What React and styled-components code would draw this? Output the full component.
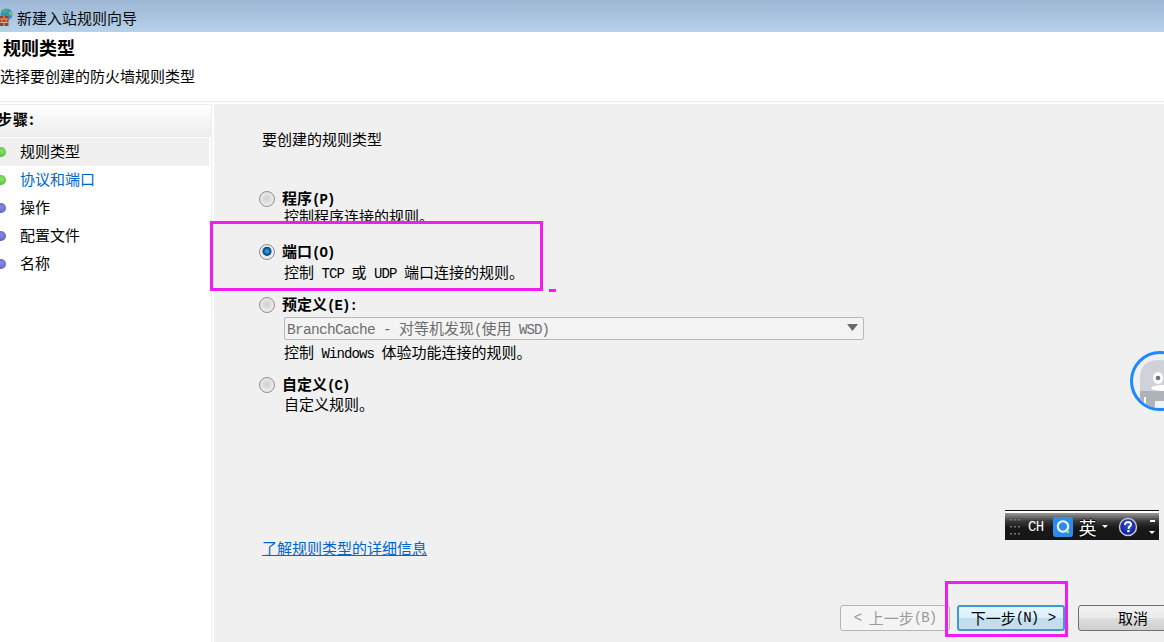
import React from 'react';
import styled, { createGlobalStyle } from 'styled-components';

const Global = createGlobalStyle`
  html, body { margin: 0; padding: 0; background: #fff; overflow: hidden; }
  body { font-family: "Noto Sans CJK SC", "Liberation Sans", sans-serif; font-size: 15px; color: #000; }
`;
const Root = styled.div`position: relative; width: 1164px; height: 642px; overflow: hidden; display: flex; flex-direction: column; background: #fff;`;
const TitleBar = styled.div`height: 32px; flex: none; display: flex; align-items: center; gap: 4px; background: linear-gradient(#9db6d4, #b6d1ea); padding-top: 3px; box-sizing: border-box;`;
const TitleText = styled.span`font-size: 15px; line-height: 20px; color: #0a0a0a;`;
const Header = styled.div`height: 70px; flex: none; box-sizing: border-box; border-bottom: 1px solid #e8e8e8;`;
const HeadTitle = styled.div`font-size: 18px; font-weight: 700; line-height: 24px; margin: 3px 0 0 3px;`;
const HeadSub = styled.div`font-size: 15px; line-height: 20px; margin-top: 7px;`;
const Body = styled.div`flex: 1; min-height: 0; display: flex; margin-top: 2px;`;
const Side = styled.div`width: 212px; flex: none; box-sizing: border-box; border: 1px solid #ececec; border-left: 0; border-bottom: 0;`;
const StepsHead = styled.div`height: 32px; margin-bottom: 1px; box-sizing: border-box; padding-bottom: 4px; display: flex; align-items: center; font-weight: 700; font-size: 15px; line-height: 20px; background: linear-gradient(#fff, #ececec);`;
const StepsLabel = styled.span`margin-left: -3px; letter-spacing: 1px;`;
const StepRow = styled.div`height: 28px; width: 209px; box-sizing: border-box; padding-bottom: 2px; display: flex; align-items: center; gap: 14px; font-size: 15px; line-height: 20px; background: ${p => p.$active ? '#f0f0f0' : 'transparent'}; color: ${p => p.$link ? '#0066cc' : '#000'};`;
const Bullet = styled.span`width: 10px; height: 10px; margin-left: -4px; margin-top: 2px; border-radius: 50%; flex: none; background: ${p => p.$done ? 'radial-gradient(circle at 55% 40%, #90e070, #3cb528)' : 'radial-gradient(circle at 55% 40%, #8a8ae0, #5252c0)'};`;
const Main = styled.div`flex: 1; margin-left: 2px; background: #f0f0f0; display: flex; flex-direction: column; padding: 25px 0 11px 45px; min-width: 0;`;
const Heading = styled.div`line-height: 20px; height: 20px; margin-left: 3px;`;
const OptionRow = styled.div`display: flex; align-items: center; gap: 7px; height: 20px; line-height: 18px; font-weight: 700; flex: none; margin-top: ${p => p.$mt || 0}px;`;
const Radio = styled.span`width: 16px; height: 16px; border-radius: 50%; flex: none; box-sizing: border-box; border: 1px solid #8f8f8f;
  background: ${p => p.$on ? 'radial-gradient(circle at 50% 45%, #3fb0e8 0, #0e5f98 30%, #0b4a7a 40%, #e6e6e6 47%, #f6f6f6 100%)' : 'radial-gradient(circle at 50% 45%, #cfcfcf 0, #e2e2e2 45%, #f8f8f8 100%)'};`;
const OptionLabel = styled.span`margin-bottom: 2px;`;
const Desc = styled.div`height: 18px; flex: none; line-height: 18px; margin-left: 25px; margin-top: ${p => p.$mt || 0}px; white-space: pre;`;
const Lat = styled.span`font-family: "Liberation Mono", monospace; font-size: 14px; letter-spacing: -0.9px; line-height: 0; white-space: pre;`;
const SelectLat = styled(Lat)`font-size: 14.5px; letter-spacing: -0.7px;`;
const NextCaret = styled(Lat)`margin-left: 2px;`;
const Highlight = styled.div`position: relative; flex: none; box-sizing: border-box; width: 333px; height: 70px; margin: -4px 0 0 -49px; padding: 18px 0 0 46px; border: 3px solid #f01cf0; background: #f0f0f0;`;
const PredefRow = styled(OptionRow)`margin-top: 4px;`;
const Select = styled.div`width: 580px; height: 23px; flex: none; box-sizing: border-box; margin: 2px 0 0 25px; padding: 0 5px 2px 2px; display: flex; align-items: center; justify-content: space-between; border: 1px solid #b4b8b8; border-radius: 2px; background: #f3f3f3; color: #6d6d6d; font-size: 15px; line-height: 18px;`;
const LinkText = styled.a`margin: 125px 0 0 3px; line-height: 20px; height: 20px; color: #0066cc; text-decoration: underline; align-self: flex-start;`;
const Footer = styled.div`margin-top: auto; display: flex; justify-content: flex-end; margin-right: -24px;`;
const Btn = styled.button`height: 26px; box-sizing: border-box; font: inherit; font-size: 15px; line-height: 18px; padding: 0; border-radius: 3px; display: flex; align-items: center; justify-content: center; white-space: pre;`;
const BackBtn = styled(Btn)`width: 110px; border: 1px solid #b5b5b5; background: #f4f4f4; color: #9a9a9a;`;
const NextBtn = styled(Btn)`width: 108px; margin-left: 7px; padding-left: 4px; border: 2px solid #3c9ccf; background: linear-gradient(#e6f5fd 0, #d9f0fc 50%, #bedfee 52%, #c9dde6 100%); color: #000;`;
const CancelBtn = styled(Btn)`width: 110px; margin-left: 13px; border: 1px solid #707070; background: linear-gradient(#f2f2f2 0, #ebebeb 50%, #dddddd 52%, #cfcfcf 100%); color: #000;`;
const NextMark = styled.div`position: absolute; left: 945px; top: 581px; width: 123px; height: 56px; box-sizing: border-box; border: 3px solid #f01cf0;`;
const Dash = styled.div`position: absolute; left: 549px; top: 289px; width: 7px; height: 3px; background: #f01cf0;`;
const Bot = styled.div`position: absolute; left: 1130px; top: 351px; width: 60px; height: 60px; box-sizing: border-box; border: 3px solid #1e88ff; border-radius: 50%; background: #f0f0f0; overflow: hidden;`;
const Ime = styled.div`position: absolute; left: 1005px; top: 510px; width: 154px; height: 30px; box-sizing: border-box; border-top: 1px solid #111; padding-top: 2px; background: #fff;`;
const ImeInner = styled.div`height: 100%; background: linear-gradient(#9a9a9a 0, #3a3a3a 30%, #181818 55%, #161616 100%); display: flex; align-items: center;`;
const ImeCh = styled.span`font-family: "Liberation Mono", monospace; font-size: 14px; letter-spacing: -0.6px; color: #fff; margin-left: 7px;`;
const ImeYing = styled.span`font-size: 18px; line-height: 20px; color: #fff; margin-left: 6px; text-shadow: 1px 0 0 #000, -1px 0 0 #000, 0 1px 0 #000, 0 -1px 0 #000;`;
const ImeCaret = styled.span`width: 0; height: 0; border: 3px solid transparent; border-top: 3px solid #fff; border-bottom: 0; margin-left: 5px; flex: none;`;
const ImeMarks = styled.span`display: flex; flex-direction: column; gap: 9px; margin-left: 12px; width: 5px; align-items: center; flex: none;`;
const ImeDash = styled.span`width: 5px; height: 2px; background: #fff;`;
const MarkCaret = styled(ImeCaret)`margin-left: 0;`;

const WallIcon = () => (
  <svg width="13" height="19" viewBox="0 0 13 19" style={{flex:'none'}}>
    <circle cx="6.500" cy="6.500" r="6" fill="#2f8fd0"/>
    <path d="M1.500 3.500 Q4 0.500 8 1 L7 4.500 L3 5.500Z" fill="#4fb04f"/>
    <path d="M9 2.500 L12.500 5 L12 8 L9 6.500Z" fill="#70c070"/>
    <rect x="0" y="8" width="8.500" height="10" fill="#9a4028"/>
    <path d="M0 11h8.500M0 14.500h8.500M4 8v3M2 11v3.500M6 11v3.500M4 14.500v3.500" stroke="#d8a890" strokeWidth="1" fill="none"/>
  </svg>
);
const QLogo = () => (
  <svg width="20" height="20" viewBox="0 0 20 20" style={{marginLeft:9, flex:'none'}}>
    <rect width="20" height="20" rx="3" fill="#2e8bf0"/>
    <circle cx="10" cy="9.500" r="5.200" fill="none" stroke="#fff" strokeWidth="2"/>
    <rect x="13.500" y="13.500" width="2.500" height="2.500" fill="#b8e04a"/>
  </svg>
);
const Help = () => (
  <svg width="20" height="20" viewBox="0 0 20 20" style={{marginLeft:10, flex:'none'}}>
    <defs><radialGradient id="hb" cx="50%" cy="40%" r="60%"><stop offset="0" stopColor="#3a4fe0"/><stop offset="1" stopColor="#0a1a90"/></radialGradient></defs>
    <circle cx="10" cy="10" r="8.500" fill="url(#hb)" stroke="#c8c8c8" strokeWidth="1.500"/>
    <path d="M7 8 Q7 5 10 5 Q13 5 13 7.500 Q13 9 11 10 L10.500 12" stroke="#fff" strokeWidth="2" fill="none"/>
    <rect x="9.300" y="13" width="2.200" height="2.200" fill="#fff"/>
  </svg>
);
const Dots = () => (
  <svg width="12" height="18" viewBox="0 0 12 18" style={{marginLeft:4, flex:'none'}}>
    <path d="M1 1h2v1.500H1zM5 1h2v1.500H5zM9 1h2v1.500H9zM1 8h2v1.500H1zM5 8h2v1.500H5zM9 8h2v1.500H9zM1 15h2v1.500H1zM5 15h2v1.500H5zM9 15h2v1.500H9z" fill="#777"/>
  </svg>
);
const BotFace = () => (
  <svg width="54" height="54" viewBox="0 0 54 54">
    <path d="M7 54 V24 Q7 6 26 6 Q45 6 45 24 V54Z" fill="#cfd3d9"/>
    <rect x="7" y="37" width="40" height="17" fill="#aeb3ba"/>
    <ellipse cx="25" cy="24" rx="5" ry="6" fill="#fff"/>
    <circle cx="25" cy="24" r="2.300" fill="#70757d"/>
    <ellipse cx="30" cy="34" rx="12" ry="3" fill="#fff"/>
    <rect x="22" y="47" width="12" height="7" fill="#f0f4f8"/>
    <rect x="11" y="43" width="2" height="8" fill="#fff"/>
  </svg>
);
const Arrow = () => (
  <svg width="11" height="7" viewBox="0 0 11 7" style={{flex:'none'}}><path d="M0 0h11L5.500 7z" fill="#6a6a6a"/></svg>
);

const steps = [
  { t: '规则类型', done: true, active: true },
  { t: '协议和端口', done: true, link: true },
  { t: '操作' },
  { t: '配置文件' },
  { t: '名称' },
];

export default function App() {
  return (
    <Root>
      <Global />
      <TitleBar><WallIcon /><TitleText>新建入站规则向导</TitleText></TitleBar>
      <Header>
        <HeadTitle>规则类型</HeadTitle>
        <HeadSub>选择要创建的防火墙规则类型</HeadSub>
      </Header>
      <Body>
        <Side>
          <StepsHead><StepsLabel>步骤:</StepsLabel></StepsHead>
          {steps.map(s => (
            <StepRow key={s.t} $active={s.active} $link={s.link}>
              <Bullet $done={s.done} />{s.t}
            </StepRow>
          ))}
        </Side>
        <Main>
          <Heading>要创建的规则类型</Heading>
          <OptionRow $mt={40}><Radio /><OptionLabel>程序<Lat>(P)</Lat></OptionLabel></OptionRow>
          <Desc $mt={-2}>控制程序连接的规则。</Desc>
          <Highlight>
            <OptionRow><Radio $on /><OptionLabel>端口<Lat>(O)</Lat></OptionLabel></OptionRow>
            <Desc $mt={1}>控制<Lat> TCP </Lat>或<Lat> UDP </Lat>端口连接的规则。</Desc>
          </Highlight>
          <PredefRow><Radio /><OptionLabel>预定义<Lat>(E):</Lat></OptionLabel></PredefRow>
          <Select>
            <span><SelectLat>BranchCache - </SelectLat>对等机发现<Lat>(</Lat>使用<Lat> WSD)</Lat></span>
            <Arrow />
          </Select>
          <Desc $mt={3}>控制<Lat> Windows </Lat>体验功能连接的规则。</Desc>
          <OptionRow $mt={14}><Radio /><OptionLabel>自定义<Lat>(C)</Lat></OptionLabel></OptionRow>
          <Desc>自定义规则。</Desc>
          <LinkText>了解规则类型的详细信息</LinkText>
          <Footer>
            <BackBtn><Lat>{'< '}</Lat>上一步<Lat>(B)</Lat></BackBtn>
            <NextBtn>下一步<Lat>(N) </Lat><NextCaret>&gt;</NextCaret></NextBtn>
            <CancelBtn>取消</CancelBtn>
          </Footer>
        </Main>
      </Body>
      <Dash />
      <NextMark />
      <Bot><BotFace /></Bot>
      <Ime>
        <ImeInner>
          <Dots />
          <ImeCh>CH</ImeCh>
          <QLogo />
          <ImeYing>英</ImeYing>
          <ImeCaret />
          <Help />
          <ImeMarks><ImeDash /><MarkCaret /></ImeMarks>
        </ImeInner>
      </Ime>
    </Root>
  );
}
